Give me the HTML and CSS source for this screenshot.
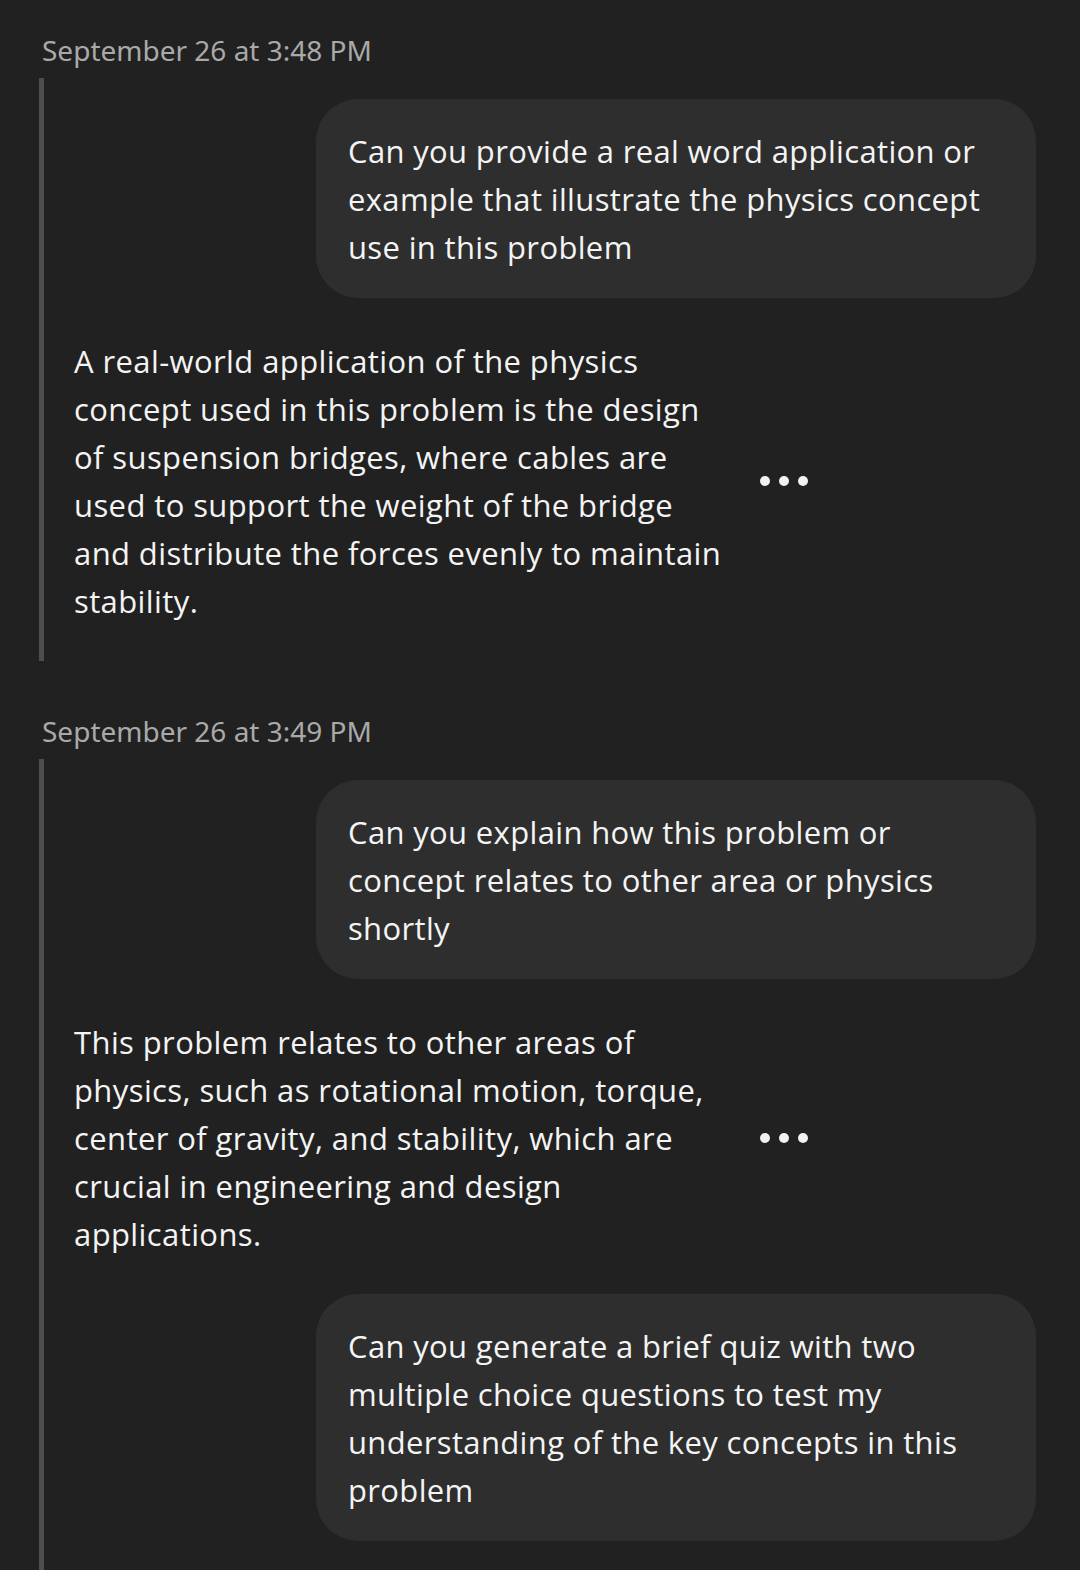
FILE: index.html
```html
<!DOCTYPE html>
<html>
<head>
<meta charset="utf-8">
<link rel="stylesheet" href="styles.css">
</head>
<body>
<div class="page">
  <section class="group">
    <div class="stamp">September 26 at 3:48 PM</div>
    <div class="thread">
      <div class="user-row">
        <div class="bubble">Can you provide a real word application or example that illustrate the physics concept use in this problem</div>
      </div>
      <div class="bot-row">
        <div class="bot-text">A real-world application of the physics concept used in this problem is the design of suspension bridges, where cables are used to support the weight of the bridge and distribute the forces evenly to maintain stability.</div>
        <div class="more"><span></span><span></span><span></span></div>
      </div>
    </div>
  </section>
  <section class="group">
    <div class="stamp">September 26 at 3:49 PM</div>
    <div class="thread">
      <div class="user-row">
        <div class="bubble">Can you explain how this problem or concept relates to other area or physics shortly</div>
      </div>
      <div class="bot-row">
        <div class="bot-text">This problem relates to other areas of physics, such as rotational motion, torque, center of gravity, and stability, which are crucial in engineering and design applications.</div>
        <div class="more"><span></span><span></span><span></span></div>
      </div>
      <div class="user-row">
        <div class="bubble">Can you generate a brief quiz with two multiple choice questions to test my understanding of the key concepts in this problem</div>
      </div>
    </div>
  </section>
</div>
</body>
</html>
```

FILE: styles.css
```css
html, body {
  margin: 0;
  padding: 0;
  background: #212121;
  height: 1570px;
  overflow: hidden;
}
.page {
  box-sizing: border-box;
  height: 1570px;
  display: flex;
  flex-direction: column;
  padding-top: 32px;
  padding-left: 39px;
  font-family: "Open Sans", "Noto Sans", sans-serif;
}
.group + .group {
  margin-top: 52px;
}
.group:last-child {
  flex: 1;
  display: flex;
  flex-direction: column;
}
.group:last-child .thread {
  flex: 1;
}
.stamp {
  margin-left: 3px;
  font-family: "Noto Sans", sans-serif;
  font-size: 28px;
  line-height: 36px;
  color: #a9a9a9;
}
.thread {
  margin-top: 10px;
  border-left: 5px solid #4d4d4d;
  padding-top: 21px;
}
.user-row {
  display: flex;
  justify-content: flex-end;
  padding-right: 44px;
}
.bubble {
  width: 720px;
  box-sizing: border-box;
  background: #2e2e2e;
  border-radius: 42px;
  padding: 28px 40px 27px 32px;
  color: #f4f4f4;
  font-size: 31px;
  line-height: 48px;
  letter-spacing: 0.35px;
}
.bot-row {
  display: flex;
  align-items: center;
  padding: 39px 0 36px 30px;
}
.bot-text {
  width: 652px;
  color: #f4f4f4;
  font-size: 31px;
  line-height: 48px;
  letter-spacing: 0.4px;
}
.more {
  display: flex;
  gap: 9px;
  margin-left: 34px;
}
.more span {
  width: 10px;
  height: 10px;
  border-radius: 50%;
  background: #f2f2f2;
}
```
